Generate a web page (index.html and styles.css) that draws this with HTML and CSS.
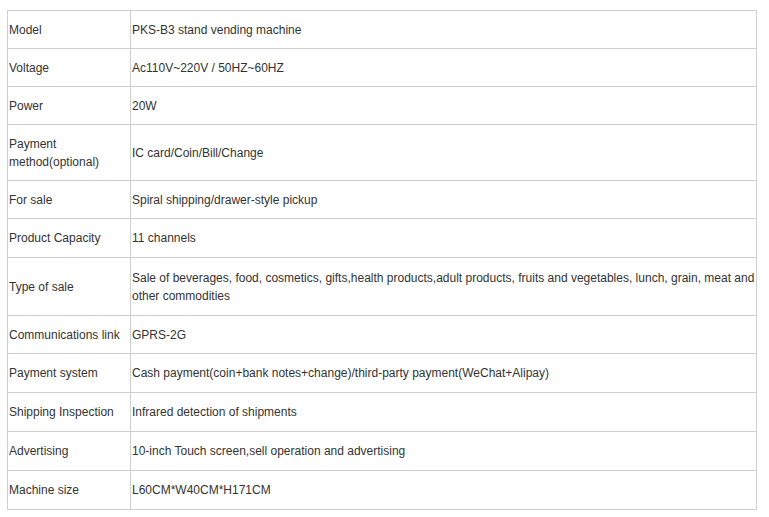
FILE: index.html
```html
<!DOCTYPE html>
<html>
<head>
<meta charset="utf-8">
<link rel="stylesheet" href="styles.css">
</head>
<body>
<table class="spec">
  <tr><td class="k">Model</td><td>PKS-B3 stand vending machine</td></tr>
  <tr><td class="k">Voltage</td><td>Ac110V~220V / 50HZ~60HZ</td></tr>
  <tr><td class="k">Power</td><td>20W</td></tr>
  <tr><td class="k">Payment method(optional)</td><td>IC card/Coin/Bill/Change</td></tr>
  <tr><td class="k">For sale</td><td>Spiral shipping/drawer-style pickup</td></tr>
  <tr class="tall"><td class="k">Product Capacity</td><td>11 channels</td></tr>
  <tr class="taller"><td class="k">Type of sale</td><td>Sale of beverages, food, cosmetics, gifts,health products,adult products, fruits and vegetables, lunch, grain, meat and other commodities</td></tr>
  <tr><td class="k">Communications link</td><td>GPRS-2G</td></tr>
  <tr class="tall"><td class="k">Payment system</td><td>Cash payment(coin+bank notes+change)/third-party payment(WeChat+Alipay)</td></tr>
  <tr class="tall"><td class="k">Shipping Inspection</td><td>Infrared detection of shipments</td></tr>
  <tr class="tall"><td class="k">Advertising</td><td>10-inch Touch screen,sell operation and advertising</td></tr>
  <tr class="tall"><td class="k">Machine size</td><td>L60CM*W40CM*H171CM</td></tr>
</table>
</body>
</html>
```
FILE: styles.css
```css
html, body {
  margin: 0;
  padding: 0;
  background: #fff;
}
.spec {
  margin: 10px 0 0 7px;
  width: 750px;
  border-collapse: collapse;
  font-family: "Liberation Sans", Arial, sans-serif;
  font-size: 12px;
  line-height: 18px;
  color: #333;
}
.spec td {
  border: 1px solid #cfcfcf;
  padding: 9.5px 1px;
  vertical-align: middle;
  text-align: left;
}
.spec .tall td {
  padding: 10px 1px;
}
.spec .taller td {
  padding: 10.5px 1px;
}
.spec td.k {
  width: 120px;
}
```
